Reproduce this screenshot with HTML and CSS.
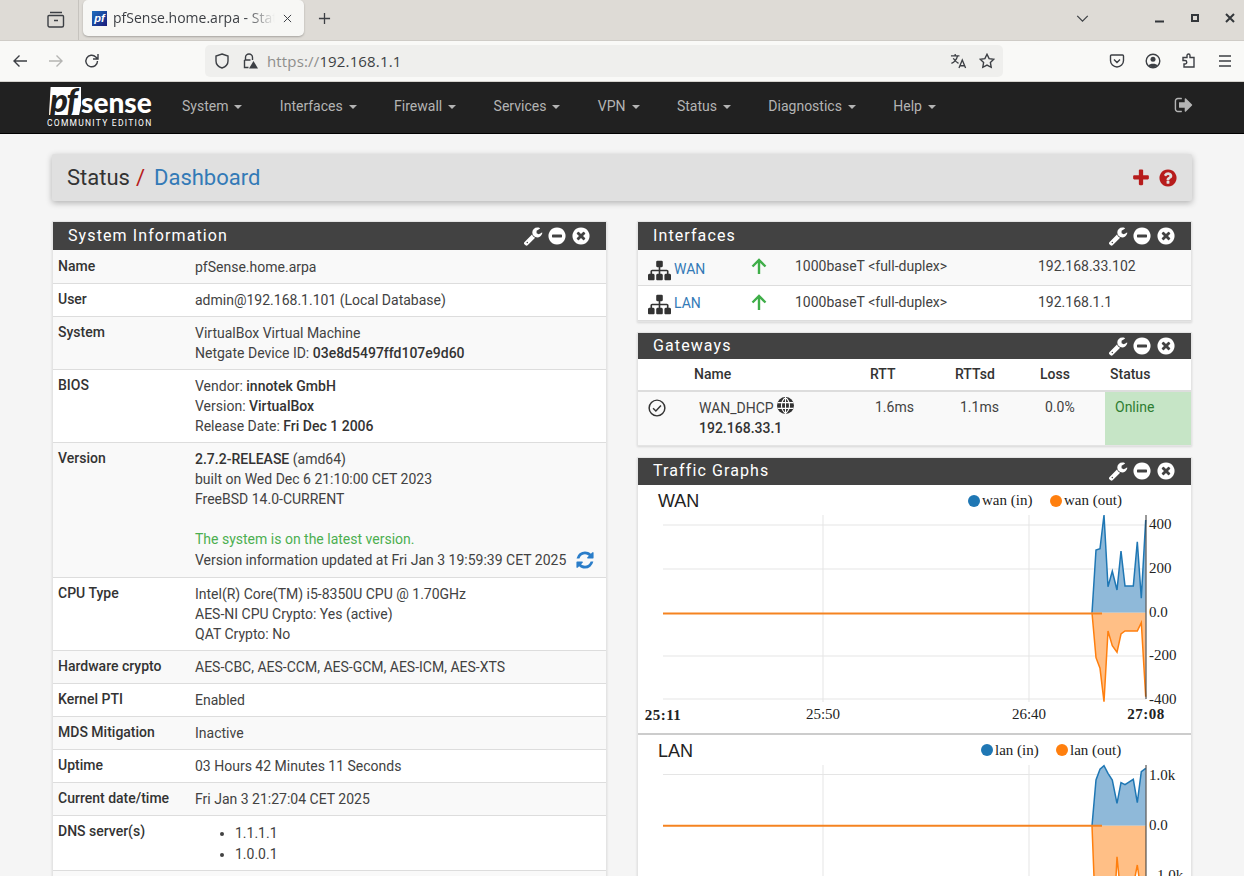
FILE: index.html
```html
<!DOCTYPE html>
<html lang="en">
<head>
<meta charset="utf-8">
<title>pfSense.home.arpa - Status: Dashboard</title>
<link rel="stylesheet" href="styles.css">
</head>
<body>
<svg class="defs" width="0" height="0" aria-hidden="true">
  <symbol id="i-minus" viewBox="0 0 1792 1792"><path d="M1344 960v-128q0-26-19-45t-45-19h-768q-26 0-45 19t-19 45v128q0 26 19 45t45 19h768q26 0 45-19t19-45zm320-64q0 209-103 385.5t-279.5 279.5-385.5 103-385.5-103-279.5-279.5-103-385.5 103-385.5 279.5-279.5 385.5-103 385.5 103 279.5 279.5 103 385.5z"/></symbol>
  <symbol id="i-times" viewBox="0 0 1792 1792"><path d="M1277 1122q0-26-19-45l-181-181 181-181q19-19 19-45 0-27-19-46l-90-90q-19-19-46-19-26 0-45 19l-181 181-181-181q-19-19-45-19-27 0-46 19l-90 90q-19 19-19 46 0 26 19 45l181 181-181 181q-19 19-19 45 0 27 19 46l90 90q19 19 46 19 26 0 45-19l181-181 181 181q19 19 45 19 27 0 46-19l90-90q19-19 19-46zm387-226q0 209-103 385.5t-279.5 279.5-385.5 103-385.5-103-279.5-279.5-103-385.5 103-385.5 279.5-279.5 385.5-103 385.5 103 279.5 279.5 103 385.5z"/></symbol>
  <symbol id="i-wrench" viewBox="0 0 1792 1792"><path d="M448 1472q0-26-19-45t-45-19-45 19-19 45 19 45 45 19 45-19 19-45zm644-420l-682 682q-37 37-90 37-52 0-91-37l-106-108q-38-36-38-90 0-53 38-91l681-681q39 98 114.5 173.5t173.5 114.5zm634-435q0 39-23 106-47 134-164.5 217.5t-258.5 83.5q-185 0-316.5-131.5t-131.5-316.5 131.5-316.5 316.5-131.5q58 0 121.5 16.5t107.5 46.5q16 11 16 28t-16 28l-293 169v224l193 107q5-3 79-48.5t135.5-81 70.5-35.5q15 0 23.5 10t8.5 25z"/></symbol>
  <symbol id="i-sitemap" viewBox="0 0 1792 1792"><path d="M1792 1248v320q0 40-28 68t-68 28h-320q-40 0-68-28t-28-68v-320q0-40 28-68t68-28h96v-192h-512v192h96q40 0 68 28t28 68v320q0 40-28 68t-68 28h-320q-40 0-68-28t-28-68v-320q0-40 28-68t68-28h96v-192h-512v192h96q40 0 68 28t28 68v320q0 40-28 68t-68 28h-320q-40 0-68-28t-28-68v-320q0-40 28-68t68-28h96v-192q0-52 38-90t90-38h512v-192h-96q-40 0-68-28t-28-68v-320q0-40 28-68t68-28h320q40 0 68 28t28 68v320q0 40-28 68t-68 28h-96v192h512q52 0 90 38t38 90v192h96q40 0 68 28t28 68z"/></symbol>
  <symbol id="i-question" viewBox="0 0 1792 1792"><path d="M1024 1376v-192q0-14-9-23t-23-9h-192q-14 0-23 9t-9 23v192q0 14 9 23t23 9h192q14 0 23-9t9-23zm256-672q0-88-55.5-163t-138.5-116-170-41q-243 0-371 213-15 24 8 42l132 100q7 6 19 6 16 0 25-12 53-68 86-92 34-24 86-24 48 0 85.5 26t37.5 59q0 38-20 61t-68 45q-63 28-115.5 86.5t-52.5 125.5v36q0 14 9 23t23 9h192q14 0 23-9t9-23q0-19 21.5-49.5t54.5-49.5q32-18 49-28.5t46-35 44.5-48 28-60.5 12.5-81zm384 192q0 209-103 385.5t-279.5 279.5-385.5 103-385.5-103-279.5-279.5-103-385.5 103-385.5 279.5-279.5 385.5-103 385.5 103 279.5 279.5 103 385.5z"/></symbol>
  <symbol id="i-plus" viewBox="0 0 1792 1792"><path d="M1600 736v192q0 40-28 68t-68 28h-416v416q0 40-28 68t-68 28h-192q-40 0-68-28t-28-68v-416h-416q-40 0-68-28t-28-68v-192q0-40 28-68t68-28h416v-416q0-40 28-68t68-28h192q40 0 68 28t28 68v416h416q40 0 68 28t28 68z"/></symbol>
  <symbol id="i-signout" viewBox="0 0 1792 1792"><path d="M704 1440q0 4 1 20t.5 26.5-3 23.5-10 19.5-20.5 6.5h-320q-119 0-203.5-84.5t-84.5-203.5v-704q0-119 84.5-203.5t203.5-84.5h320q13 0 22.5 9.5t9.5 22.5q0 4 1 20t.5 26.5-3 23.5-10 19.5-20.5 6.5h-320q-66 0-113 47t-47 113v704q0 66 47 113t113 47h312l11.5 1 11.5 3 8 5.5 7 9 2 13.5zm928-544q0 26-19 45l-544 544q-19 19-45 19t-45-19-19-45v-288h-448q-26 0-45-19t-19-45v-384q0-26 19-45t45-19h448v-288q0-26 19-45t45-19 45 19l544 544q19 19 19 45z"/></symbol>
  <symbol id="i-refresh" viewBox="0 0 1792 1792"><path d="M1639 1056q0 5-1 7-64 268-268 434.5t-478 166.5q-146 0-282.5-55t-243.5-157l-129 129q-19 19-45 19t-45-19-19-45v-448q0-26 19-45t45-19h448q26 0 45 19t19 45-19 45l-137 137q71 66 161 102t187 36q134 0 250-65t186-179q11-17 53-117 8-23 30-23h192q13 0 22.5 9.5t9.5 22.5zm25-800v448q0 26-19 45t-45 19h-448q-26 0-45-19t-19-45 19-45l138-138q-148-137-349-137-134 0-250 65t-186 179q-11 17-53 117-8 23-30 23h-199q-13 0-22.5-9.5t-9.5-22.5v-7q65-268 270-434.5t480-166.5q146 0 284 55.5t245 156.5l130-129q19-19 45-19t45 19 19 45z"/></symbol>
  <symbol id="i-up" viewBox="0 0 16 16"><path d="M8 16V2M1.500 8.500L8 2l6.500 6.500" fill="none" stroke="#3fae49" stroke-width="2.400"/></symbol>
</svg>

<header class="tabbar">
  <svg class="ff-icon tab-view" viewBox="0 0 18 18"><path d="M3 1.500h12M2 4.500h14M2.500 4.500h13a1 1 0 0 1 1 1v9a1.500 1.500 0 0 1-1.500 1.500h-12.500a1.500 1.500 0 0 1-1.500-1.500v-9a1 1 0 0 1 1-1zM7 9.500h4"/></svg>
  <span class="tab-sep"></span>
  <div class="tab">
    <span class="favicon">pf</span>
    <span class="tab-title">pfSense.home.arpa - Status: Dashboard</span>
    <svg class="ff-icon tab-x" viewBox="0 0 10 10"><path d="M1 1l8 8M9 1l-8 8"/></svg>
  </div>
  <svg class="ff-icon new-tab" viewBox="0 0 14 14"><path d="M7 1v12M1 7h12"/></svg>
  <div class="tab-end">
    <svg class="ff-icon list-tabs" viewBox="0 0 14 8"><path d="M1 1l6 6 6-6"/></svg>
    <svg class="win-btn" viewBox="0 0 10 10"><rect x="0" y="7.500" width="9" height="2"/></svg>
    <svg class="win-btn" viewBox="0 0 10 10"><path d="M1 1h8v8h-8zM3 3v4h4v-4z" fill-rule="evenodd"/></svg>
    <svg class="win-close" viewBox="0 0 10 10"><path d="M1 1l8 8M9 1l-8 8"/></svg>
  </div>
</header>

<div class="toolbar">
  <svg class="ff-icon nav-ic" viewBox="0 0 16 16"><path d="M15 8h-13M7.500 2.500l-5.500 5.500 5.500 5.500"/></svg>
  <svg class="ff-icon nav-ic dim" viewBox="0 0 16 16"><path d="M1 8h13M8.500 2.500l5.500 5.500-5.500 5.500"/></svg>
  <svg class="ff-icon nav-ic" viewBox="0 0 16 16"><path d="M13.500 8a5.800 5.800 0 1 1-1.700-4.100l1.700 1.800M14 1v5h-5"/></svg>
  <div class="urlbar">
    <svg class="ff-icon url-ic" viewBox="0 0 16 16"><path d="M8 1l6 2v5c0 3.500-3 6-6 7-3-1-6-3.500-6-7v-5z"/></svg>
    <svg class="ff-icon url-ic lock" viewBox="0 0 16 16"><path d="M3.500 7v-2.500a3.500 3.500 0 0 1 7 0v2.500M2.500 7h6M2.500 7v7.500h4"/><path class="warn" d="M11.500 8l4.500 7.500h-9z"/></svg>
    <span class="url"><span class="url-dim">https://</span>192.168.1.1</span>
    <svg class="ff-icon url-end translate" viewBox="0 0 18 18"><path d="M1 3h9M5.500 1v2M8 3c-1 4-3 6.500-6.500 8M3.500 5.500c1 2 3 4 5.500 5.500M9.500 16l3.500-8.500 3.500 8.500M10.700 13.500h4.600"/></svg>
    <svg class="ff-icon url-end" viewBox="0 0 16 16"><path d="M8 1.300l2.100 4.300 4.700.7-3.400 3.300.8 4.700-4.200-2.200-4.200 2.200.8-4.700-3.400-3.300 4.700-.7z"/></svg>
  </div>
  <div class="tool-right">
    <svg class="ff-icon tool-ic" viewBox="0 0 16 16"><path d="M2.500 2h11a1 1 0 0 1 1 1v4.500a6.500 6.500 0 0 1-13 0v-4.500a1 1 0 0 1 1-1zM5 6.500l3 3 3-3"/></svg>
    <svg class="ff-icon tool-ic" viewBox="0 0 16 16"><circle cx="8" cy="8" r="6.800"/><circle class="solid" cx="8" cy="6.200" r="2.500"/><path class="solid" d="M3.500 12.500c1-2.500 8-2.500 9 0-2 2-7 2-9 0z"/></svg>
    <svg class="ff-icon tool-ic" viewBox="0 0 16 16"><path d="M6 2.500a1.500 1.500 0 0 1 3 0v2h4v9.500h-10v-3h1a1.500 1.500 0 0 0 0-3.500h-2v-3h4z"/></svg>
    <svg class="ff-icon tool-ic" viewBox="0 0 16 16"><path d="M2 3h12M2 8h12M2 13h12"/></svg>
  </div>
</div>

<nav class="navbar">
  <a class="brand">
    <span class="brand-top"><span class="brand-pf">pf</span><span class="brand-sense">sense</span></span>
    <span class="brand-sub">COMMUNITY EDITION</span>
  </a>
  <ul class="menu">
    <li>System<i class="caret"></i></li>
    <li>Interfaces<i class="caret"></i></li>
    <li>Firewall<i class="caret"></i></li>
    <li>Services<i class="caret"></i></li>
    <li>VPN<i class="caret"></i></li>
    <li>Status<i class="caret"></i></li>
    <li>Diagnostics<i class="caret"></i></li>
    <li>Help<i class="caret"></i></li>
  </ul>
  <svg class="logout" aria-label="Logout"><use href="#i-signout"/></svg>
</nav>

<main class="page">
  <div class="crumbs">
    <h1><span class="crumb-parent">Status</span><span class="crumb-sep">/</span><a>Dashboard</a></h1>
    <div class="crumb-actions">
      <svg class="crumb-ic"><use href="#i-plus"/></svg>
      <svg class="crumb-ic"><use href="#i-question"/></svg>
    </div>
  </div>

  <div class="columns">
    <section class="panel">
      <div class="panel-head">
        <h2>System Information</h2>
        <div class="panel-tools">
          <svg><use href="#i-wrench"/></svg><svg><use href="#i-minus"/></svg><svg><use href="#i-times"/></svg>
        </div>
      </div>
      <table class="info">
        <tr class="first"><th>Name</th><td>pfSense.home.arpa</td></tr>
        <tr><th>User</th><td>admin@192.168.1.101 (Local Database)</td></tr>
        <tr><th>System</th><td>VirtualBox Virtual Machine<br>Netgate Device ID: <b>03e8d5497ffd107e9d60</b></td></tr>
        <tr><th>BIOS</th><td>Vendor: <b>innotek GmbH</b><br>Version: <b>VirtualBox</b><br>Release Date: <b>Fri Dec 1 2006</b></td></tr>
        <tr><th>Version</th><td><b>2.7.2-RELEASE</b> (amd64)<br>built on Wed Dec 6 21:10:00 CET 2023<br>FreeBSD 14.0-CURRENT<br><br><span class="ok">The system is on the latest version.</span><br><span class="ver-line">Version information updated at Fri Jan 3 19:59:39 CET 2025<svg class="refresh"><use href="#i-refresh"/></svg></span></td></tr>
        <tr><th>CPU Type</th><td>Intel(R) Core(TM) i5-8350U CPU @ 1.70GHz<br>AES-NI CPU Crypto: Yes (active)<br>QAT Crypto: No</td></tr>
        <tr><th>Hardware crypto</th><td>AES-CBC, AES-CCM, AES-GCM, AES-ICM, AES-XTS</td></tr>
        <tr><th>Kernel PTI</th><td>Enabled</td></tr>
        <tr><th>MDS Mitigation</th><td>Inactive</td></tr>
        <tr><th>Uptime</th><td>03 Hours 42 Minutes 11 Seconds</td></tr>
        <tr><th>Current date/time</th><td>Fri Jan 3 21:27:04 CET 2025</td></tr>
        <tr class="dns-row"><th>DNS server(s)</th><td><ul class="dns"><li>1.1.1.1</li><li>1.0.0.1</li></ul></td></tr>
        <tr><th>&nbsp;</th><td>&nbsp;</td></tr>
      </table>
    </section>

    <div class="stack">
      <section class="panel">
        <div class="panel-head">
          <h2>Interfaces</h2>
          <div class="panel-tools">
            <svg><use href="#i-wrench"/></svg><svg><use href="#i-minus"/></svg><svg><use href="#i-times"/></svg>
          </div>
        </div>
        <table class="ifaces">
          <tr>
            <td class="if-name"><svg class="sitemap"><use href="#i-sitemap"/></svg><a>WAN</a></td>
            <td class="if-up"><svg><use href="#i-up"/></svg></td>
            <td class="if-media">1000baseT &lt;full-duplex&gt;</td>
            <td>192.168.33.102</td>
          </tr>
          <tr>
            <td class="if-name"><svg class="sitemap"><use href="#i-sitemap"/></svg><a>LAN</a></td>
            <td class="if-up"><svg><use href="#i-up"/></svg></td>
            <td class="if-media">1000baseT &lt;full-duplex&gt;</td>
            <td>192.168.1.1</td>
          </tr>
        </table>
      </section>

      <section class="panel">
        <div class="panel-head gw-head">
          <h2>Gateways</h2>
          <div class="panel-tools">
            <svg><use href="#i-wrench"/></svg><svg><use href="#i-minus"/></svg><svg><use href="#i-times"/></svg>
          </div>
        </div>
        <table class="gateways">
          <thead>
            <tr><th></th><th class="gw-name">Name</th><th>RTT</th><th>RTTsd</th><th>Loss</th><th>Status</th></tr>
          </thead>
          <tbody>
            <tr>
              <td class="gw-check"><svg viewBox="0 0 16 16"><circle cx="8" cy="8" r="7"/><path d="M4.500 8.200l2.500 2.500 4.500-5"/></svg></td>
              <td class="gw-host">WAN_DHCP<svg class="globe" viewBox="0 0 16 16"><circle class="globe-disc" cx="8" cy="8" r="8"/><path d="M8 0v16M.5 5.300h15M.5 10.700h15M8 .5c-5 4-5 11 0 15M8 .5c5 4 5 11 0 15"/></svg><br><b>192.168.33.1</b></td>
              <td>1.6ms</td>
              <td>1.1ms</td>
              <td>0.0%</td>
              <td class="online">Online</td>
            </tr>
          </tbody>
        </table>
      </section>

      <section class="panel traffic">
        <div class="panel-head short">
          <h2>Traffic Graphs</h2>
          <div class="panel-tools">
            <svg><use href="#i-wrench"/></svg><svg><use href="#i-minus"/></svg><svg><use href="#i-times"/></svg>
          </div>
        </div>
        <div class="graph">
          <h3>WAN</h3>
          <svg class="chart wan" viewBox="0 0 553 248">
            <g class="grid">
              <path d="M25 40H508M25 84H508M25 171H508M25 214H508"/>
              <path d="M185 30V217M391 30V217"/>
            </g>
            <g class="legend">
              <circle class="dot-in" cx="336" cy="16" r="6"/><text x="344" y="20">wan (in)</text>
              <circle class="dot-out" cx="418" cy="16" r="6"/><text x="426" y="20">wan (out)</text>
            </g>
            <path class="area-in" d="M454 127.700L458 65 462 63.700 466 30 470 101.700 474.300 86.300 479 105 483 66 487 101 495.300 101 499.300 56.700 503.300 113.300 507.700 35V127.700Z"/>
            <path class="line-in" d="M454 127.700L458 65 462 63.700 466 30 470 101.700 474.300 86.300 479 105 483 66 487 101 495.300 101 499.300 56.700 503.300 113.300 507.700 35"/>
            <path class="area-out" d="M454 127.700L458 172.700 462 183.300 466 216.700 470 146 474.300 160.700 479 167.300 483 149 487 146 499.300 146 503.300 137.700 507.700 211.700V127.700Z"/>
            <path class="line-out" d="M454 127.700L458 172.700 462 183.300 466 216.700 470 146 474.300 160.700 479 167.300 483 149 487 146 499.300 146 503.300 137.700 507.700 211.700"/>
            <path class="flat" d="M25 128.500H464"/>
            <path class="axis" d="M508 30V214"/>
            <g class="ticks">
              <text x="511" y="44">400</text>
              <text x="511" y="88">200</text>
              <text x="511" y="132">0.0</text>
              <text x="511" y="175">-200</text>
              <text x="511" y="219">-400</text>
              <text class="tick-x bold" x="25" y="235">25:11</text>
              <text class="tick-x" x="185" y="234">25:50</text>
              <text class="tick-x" x="391" y="234">26:40</text>
              <text class="tick-x bold" x="508" y="234">27:08</text>
            </g>
          </svg>
        </div>
        <div class="graph">
          <h3>LAN</h3>
          <svg class="chart lan" viewBox="0 0 553 142">
            <g class="grid">
              <path d="M25 39.500H508"/>
              <path d="M185 30V142M391 30V142"/>
            </g>
            <g class="legend">
              <circle class="dot-in" cx="349" cy="15" r="6"/><text x="357" y="20">lan (in)</text>
              <circle class="dot-out" cx="424" cy="15" r="6"/><text x="432" y="20">lan (out)</text>
            </g>
            <path class="area-in" d="M454 90.700L458 45 462 34.300 466 30.700 470 38.300 474.300 45 479 68.300 483 47.700 487 49.700 495.300 44.300 499.300 67.700 503.300 36.700 507.700 33.300V90.700Z"/>
            <path class="line-in" d="M454 90.700L458 45 462 34.300 466 30.700 470 38.300 474.300 45 479 68.300 483 47.700 487 49.700 495.300 44.300 499.300 67.700 503.300 36.700 507.700 33.300"/>
            <path class="area-out" d="M454 90.700L456 142H478L479 121.700 481 142H497L499.300 130 501 142H508V90.700Z"/>
            <path class="line-out" d="M454 90.700L456 142M478 142L479 121.700 481 142M497 142L499.300 130 501 142"/>
            <path class="flat" d="M25 90.700H464"/>
            <path class="axis" d="M508 30V142"/>
            <g class="ticks">
              <text x="511" y="45">1.0k</text>
              <text x="511" y="95">0.0</text>
              <text x="514" y="145">-1.0k</text>
            </g>
          </svg>
        </div>
      </section>
    </div>
  </div>
</main>
</body>
</html>
```

FILE: styles.css
```css
* { box-sizing: border-box; }
html, body { margin: 0; height: 876px; overflow: hidden; }
body { background: #f5f5f5; font: 400 14px/20px Roboto, "Liberation Sans", sans-serif; color: #333; }
.defs { position: absolute; }
h1, h2, h3, ul { margin: 0; padding: 0; font-weight: 400; }
table { border-collapse: collapse; width: 100%; table-layout: fixed; }

/* browser chrome */
.ff-icon { fill: none; stroke: #3c3f44; stroke-width: 1.4; flex: none; }
.ff-icon .solid { fill: #3c3f44; stroke: none; }
.tabbar { height: 41px; background: #dedbd6; border-bottom: 1px solid #cfccc7; display: flex; align-items: center; font-family: "Open Sans", "Noto Sans", sans-serif; }
.tab-view { width: 18px; height: 18px; margin-left: 47px; }
.tab-sep { width: 1px; height: 40px; background: #c6c3be; margin-left: 13px; }
.tab { width: 221px; height: 36px; margin-left: 4px; background: #f7f7f5; border-radius: 5px; box-shadow: 0 1px 2px rgba(0,0,0,.25); display: flex; align-items: center; padding: 0 0 0 9px; margin-top: -4px; }
.favicon { width: 15px; height: 15px; flex: none; background: linear-gradient(135deg, #1c6fc0, #1a1a7a); color: #fff; font: italic 700 11px/15px "Liberation Sans", sans-serif; text-align: center; }
.tab-title { margin-left: 6px; width: 162px; overflow: hidden; white-space: nowrap; font-size: 14px; color: #3c3f44; -webkit-mask-image: linear-gradient(90deg, #000 82%, transparent); mask-image: linear-gradient(90deg, #000 82%, transparent); }
.tab-x { width: 9px; height: 9px; margin-left: 8px; stroke-width: 1.100; }
.new-tab { width: 13px; height: 13px; margin-left: 14px; margin-top: -4px; }
.tab-end { margin-left: auto; display: flex; align-items: center; margin-top: -4px; }
.list-tabs { width: 13px; height: 7px; margin-right: 66px; }
.win-btn { width: 10px; height: 10px; fill: #33373b; margin-right: 25px; }
.win-close { width: 10px; height: 10px; stroke: #33373b; stroke-width: 2; fill: none; margin-right: 9px; }

.toolbar { height: 41px; background: #f9f9f7; border-bottom: 1px solid #d5d3ce; display: flex; align-items: center; font-family: "Open Sans", "Noto Sans", sans-serif; }
.nav-ic { width: 16px; height: 16px; margin-left: 20px; }
.nav-ic:first-child { margin-left: 12px; }
.nav-ic.dim { stroke: #b5b5b3; }
.urlbar { width: 798px; height: 32px; margin-left: 105px; background: #efefed; border-radius: 5px; display: flex; align-items: center; padding: 0 8px; }
.url-ic { width: 16px; height: 16px; margin-left: 1px; }
.url-ic.lock { margin-left: 12px; }
.warn { fill: #3c3f44; stroke: none; }
.url { margin-left: 9px; font-size: 15px; color: #3c3f44; letter-spacing: .15px; }
.url-dim { color: #8e8e8c; }
.url-end { width: 16px; height: 16px; margin-left: 12px; }
.translate { width: 17px; height: 17px; margin-left: auto; }
.tool-right { display: flex; gap: 20px; margin-left: 105.500px; }
.tool-ic { width: 16px; height: 16px; }

/* pfSense navbar */
.navbar { height: 52px; background: #212121; border-bottom: 1px solid #000; display: flex; align-items: center; }
.brand { margin-left: 47px; width: 116px; display: flex; flex-direction: column; color: #fff; }
.brand-top { display: flex; align-items: flex-end; height: 29px; margin-left: 2px; }
.brand-pf { width: 32px; height: 28px; background: #fff; color: #212121; font: italic 900 33px/24px Lato, "Liberation Sans", sans-serif; clip-path: polygon(5% 0, 100% 0, 100% 65%, 94% 100%, 0 100%); padding-left: 1px; letter-spacing: -1px; }
.brand-sense { font: 900 28px/26px Lato, "Liberation Sans", sans-serif; margin-left: 0; letter-spacing: 0; }
.brand-sub { font: 400 8.500px/11px Roboto, sans-serif; letter-spacing: 1.250px; margin-top: 3px; white-space: nowrap; }
.menu { display: flex; list-style: none; margin: -3px 0 0 19px; color: #b4b4b4; }
.menu li { margin-right: 37.400px; white-space: nowrap; }
.caret { display: inline-block; margin-left: 6px; vertical-align: middle; border-top: 4px solid #b4b4b4; border-left: 4px solid transparent; border-right: 4px solid transparent; }
.logout { width: 20px; height: 20px; fill: #b4b4b4; margin-left: auto; margin-right: 50px; margin-top: -5px; }

/* page */
.page { padding: 20px 52px 0; }
.crumbs { height: 47px; background: #e0e0e0; border-radius: 2px; box-shadow: 0 2px 6px rgba(0,0,0,.28); display: flex; align-items: center; justify-content: space-between; padding: 0 14px 0 15px; }
.crumbs h1 { font-size: 22px; line-height: 24px; display: flex; }
.crumb-sep { color: #b71c1c; margin: 0 9px 0 6px; }
.crumbs a { color: #337ab7; }
.crumb-actions { display: flex; gap: 7px; }
.crumb-ic { width: 20px; height: 20px; fill: #b71c1c; }

.columns { display: grid; grid-template-columns: 555px 555px; gap: 30px; margin-top: 20px; }
.stack { display: flex; flex-direction: column; gap: 10px; }
.panel { background: #fff; border: 1px solid #e4e4e4; box-shadow: 0 1px 2px rgba(0,0,0,.12); }
.panel.traffic { margin-top: 1px; }
.panel-head { height: 28px; background: #424242; color: #fff; display: flex; align-items: center; justify-content: space-between; padding: 0 15px; }
.panel-head.short { height: 27px; }
.panel-head.gw-head { height: 26px; }
.panel-head h2 { font-size: 16px; letter-spacing: 1.100px; line-height: 26px; }
.panel-tools { display: flex; gap: 4px; }
.panel-tools svg { width: 20px; height: 20px; fill: #fff; }
a { color: #337ab7; }

.info th { width: 137px; padding: 5px 0 6px 5px; text-align: left; font-weight: 500; vertical-align: top; }
.info td { padding: 6px 0 6px 5px; vertical-align: top; color: #424242; font-weight: 400; }
.info tr { border-bottom: 1px solid #ddd; }
.info tr:nth-child(odd) { background: #f9f9f9; }
.info .first th { padding-top: 6px; }
.info .first td { padding-top: 7px; }
.info .dns-row td { padding-top: 7px; }
.dns li { line-height: 20.500px; }
.info b, .gateways b { font-weight: 500; color: #333; }
.ok { color: #4caf50; }
.ver-line { display: inline-flex; align-items: center; height: 22px; }
.refresh { width: 20px; height: 20px; fill: #2a7dc9; margin-left: 9px; }
.dns { padding-left: 40px; }

.ifaces tr { border-bottom: 1px solid #ddd; }
.ifaces tr:first-child { background: #f9f9f9; }
.ifaces td { padding: 0 0 2px; color: #424242; height: 35px; vertical-align: middle; }
.ifaces .if-name { width: 113px; padding: 0 0 0 10px; white-space: nowrap; }
.ifaces tr:first-child .if-name { padding-top: 3px; }
.if-name a { margin-left: 3px; }
.sitemap { width: 23px; height: 23px; fill: #333; vertical-align: -4px; margin-block: -4px; }
.if-up { width: 44px; }
.if-up svg { display: block; width: 16px; height: 16px; }
.if-media { width: 243px; }

.gateways th { font-weight: 500; text-align: left; height: 32px; padding: 0; border-bottom: 2px solid #ddd; }
.gateways th:nth-child(1) { width: 56px; }
.gateways th:nth-child(2) { width: 176px; }
.gateways th:nth-child(3), .gateways th:nth-child(4) { width: 85px; }
.gateways th:nth-child(5) { width: 65px; }
.gateways th:nth-child(6) { padding-left: 5px; }
.gateways tbody tr { background: #f9f9f9; }
.gateways td { vertical-align: top; padding: 5px 0 7px 5px; color: #424242; height: 53px; }
.gateways .gw-check { padding: 7px 0 0 10px; }
.gw-check svg { width: 18px; height: 18px; fill: none; stroke: #333; stroke-width: 1.300; }
.gw-host { white-space: nowrap; }
.globe { width: 17px; height: 17px; fill: none; stroke: #fff; stroke-width: 1; vertical-align: -1px; margin-left: 3px; }
.globe-disc { fill: #333; stroke: none; }
.gateways .online { background: #c6e5c6; color: #2e7d32; padding-left: 10px; }

.graph { position: relative; }
.graph + .graph { border-top: 2px solid #ccc; }
.graph h3 { position: absolute; left: 20px; top: 4px; font: 400 18px/24px "Liberation Sans", sans-serif; color: #222; }
.chart { display: block; width: 553px; font: 15px "Liberation Serif", serif; }
.chart.wan { height: 248px; }
.chart.lan { height: 142px; }
.grid path { stroke: #e5e5e5; stroke-width: 1; fill: none; }
.legend text, .ticks text { fill: #222; }
.dot-in { fill: #1f77b4; }
.dot-out { fill: #ff7f0e; }
.area-in { fill: #8fb9d9; }
.area-out { fill: #ffbf86; }
.line-in { fill: none; stroke: #1f77b4; stroke-width: 1.500; }
.line-out { fill: none; stroke: #ff7f0e; stroke-width: 1.500; }
.flat { fill: none; stroke: #f58320; stroke-width: 2; }
.axis { stroke: #333; stroke-width: 1; fill: none; }
.tick-x { text-anchor: middle; }
.tick-x.bold { font-weight: 700; letter-spacing: .5px; }
```
